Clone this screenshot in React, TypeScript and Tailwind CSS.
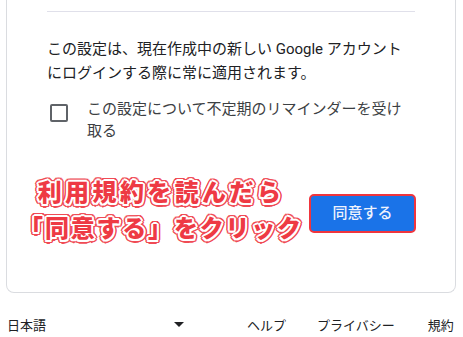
import React, { useState } from 'react';

const outline =
  '[text-shadow:2px_0_0_#fff,-2px_0_0_#fff,0_2px_0_#fff,0_-2px_0_#fff,1.5px_1.5px_0_#fff,-1.5px_1.5px_0_#fff,1.5px_-1.5px_0_#fff,-1.5px_-1.5px_0_#fff,3.5px_0_0_#f04b55,-3.5px_0_0_#f04b55,0_3.5px_0_#f04b55,0_-3.5px_0_#f04b55,2.5px_2.5px_0_#f04b55,-2.5px_2.5px_0_#f04b55,2.5px_-2.5px_0_#f04b55,-2.5px_-2.5px_0_#f04b55,3px_1.5px_0_#f04b55,-3px_1.5px_0_#f04b55,3px_-1.5px_0_#f04b55,-3px_-1.5px_0_#f04b55,1.5px_3px_0_#f04b55,-1.5px_3px_0_#f04b55,1.5px_-3px_0_#f04b55,-1.5px_-3px_0_#f04b55]';

const App: React.FC = () => {
  const [checked, setChecked] = useState(false);

  return (
    <div className="w-[463px] h-[337px] overflow-hidden bg-white text-[#202124] font-['Roboto','Noto_Sans_CJK_JP',sans-serif]">
      <div className="ml-[6px] w-[450px] border border-t-0 border-[#dadce0] rounded-b-lg px-10 pt-[11px] pb-[45px]">
        <div className="h-px bg-[#e0e0ea]" />

        <p className="mt-[25px] text-[15px] leading-6 whitespace-nowrap">
          この設定は、現在作成中の新しい Google アカウント
          <br />
          にログインする際に常に適用されます。
        </p>

        <label className="mt-[13px] flex items-start cursor-pointer">
          <span className="ml-[3px] mt-[6px] w-[18px] h-[18px] shrink-0 flex items-center justify-center">
            <input
              type="checkbox"
              checked={checked}
              onChange={() => setChecked(!checked)}
              className="appearance-none w-[18px] h-[18px] border-2 border-[#5f6368] rounded-[2px] checked:bg-[#1a73e8] checked:border-[#1a73e8]"
            />
          </span>
          <span className="ml-[19px] text-[15px] leading-[22px] text-[#3c4043] whitespace-nowrap">
            この設定について不定期のリマインダーを受け
            <br />
            取る
          </span>
        </label>

        <div className="mt-[33px] flex items-center">
          <div
            className={`-ml-[31px] w-[290px] shrink-0 text-center text-[24px] leading-9 font-black text-[#ee3a44] whitespace-nowrap ${outline}`}
          >
            <div className="tracking-[3.4px]">利用規約を読んだら</div>
            <div className="tracking-[1.8px]">「同意する」をクリック</div>
          </div>
          <button className="ml-[3px] w-[107px] h-[39px] shrink-0 rounded-[5px] border-2 border-[#f0353d] bg-[#1a73e8] text-[15px] font-medium text-[#eef2fd] mt-[5px]">
            同意する
          </button>
        </div>
      </div>

      <div className="mt-[21px] h-6 flex items-center text-[13px] text-[#202124] pl-[7px]">
        <div className="w-[177px] flex items-center justify-between">
          <span>日本語</span>
          <span className="w-0 h-0 border-x-[5px] border-x-transparent border-t-[5px] border-t-[#202124] -mt-[3px]" />
        </div>
        <a className="ml-[63px]">ヘルプ</a>
        <a className="ml-[31px]">プライバシー</a>
        <a className="ml-[33px]">規約</a>
      </div>
    </div>
  );
};

export default App;
